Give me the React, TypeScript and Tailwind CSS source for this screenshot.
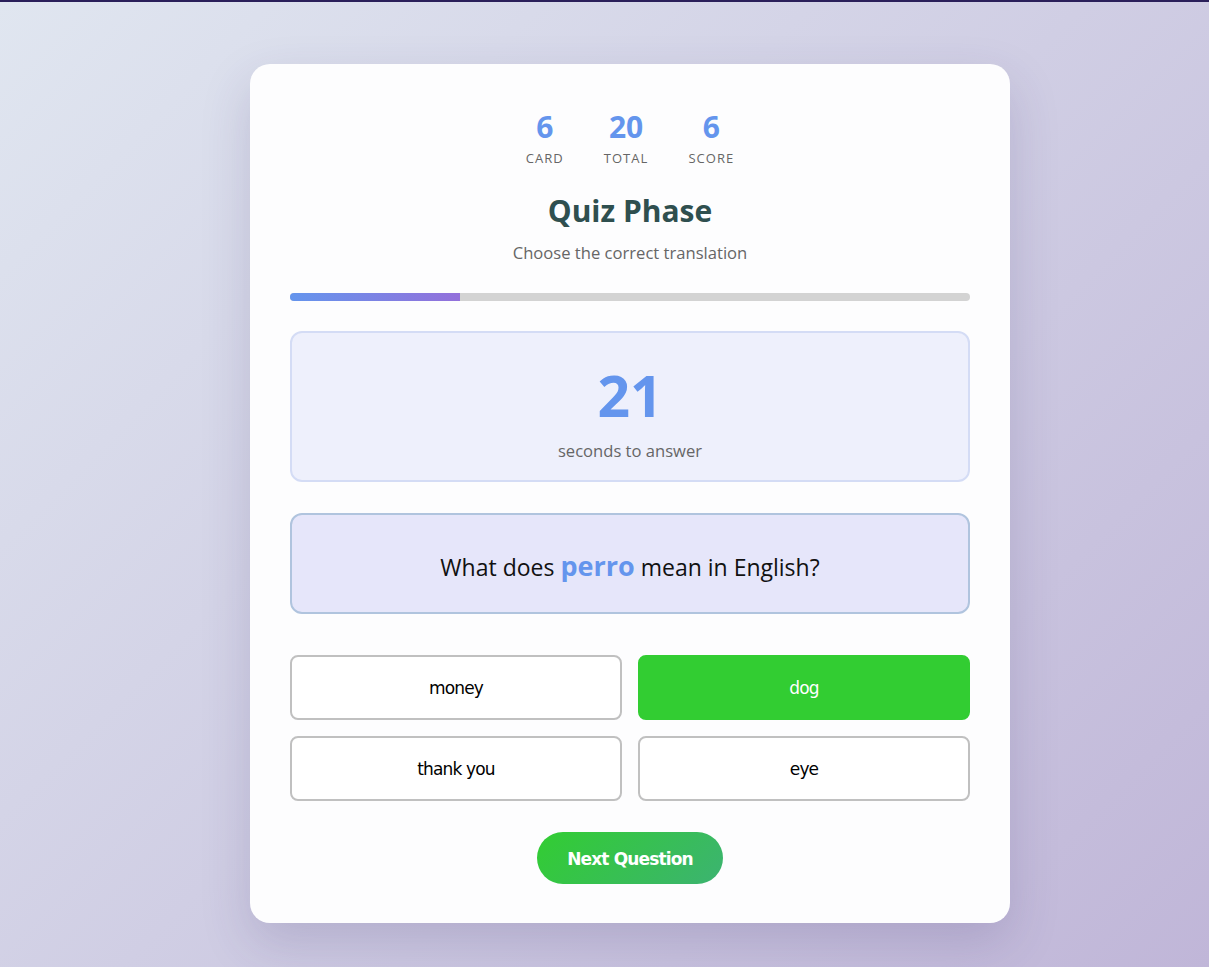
const stats = [
  { value: '6', label: 'Card' },
  { value: '20', label: 'Total' },
  { value: '6', label: 'Score' },
]

const options = [
  { text: 'money', correct: false },
  { text: 'dog', correct: true },
  { text: 'thank you', correct: false },
  { text: 'eye', correct: false },
]

export default function App() {
  return (
    <div className="min-h-[967px] bg-[linear-gradient(135deg,#e0e6f0_0%,#c0b6d8_100%)] font-['Open_Sans',sans-serif]">
      <div className="h-[2px] bg-[#2a1f5a]" />
      <div className="flex justify-center pt-[62px] pb-[45px] pl-[51px]">
        <div className="w-[760px] rounded-[20px] bg-[#fdfdfe] px-10 pt-[42px] pb-[39px] shadow-[0_20px_50px_rgba(60,50,110,0.18)]">
          <div className="flex justify-center gap-[40px]">
            {stats.map((s) => (
              <div key={s.label} className="flex flex-col items-center">
                <span className="text-[30px] font-bold leading-[42px] text-[#6495ed]">{s.value}</span>
                <span className="mt-[2px] text-[13px] uppercase leading-[16px] tracking-[0.08em] text-[#666]">{s.label}</span>
              </div>
            ))}
          </div>

          <h2 className="mt-[25px] text-center text-[30px] font-bold leading-[40px] text-[#2f4f4f]">Quiz Phase</h2>
          <p className="mt-[10px] pt-px text-center text-[16.6px] leading-[22px] text-[#666]">Choose the correct translation</p>

          <div className="mt-[29px] h-[8px] overflow-hidden rounded-full bg-[#d3d3d3]">
            <div className="h-full bg-[linear-gradient(90deg,#6495ed,#9370db)]" style={{ width: '25%' }} />
          </div>

          <div className="mt-[30px] flex h-[151px] flex-col items-center rounded-[12px] border-2 border-[#d4dcf5] bg-[#eef0fc] pt-[27px]">
            <span className="text-[57px] font-bold leading-[70px] text-[#6495ed]">21</span>
            <span className="mt-[10px] text-[16.6px] leading-[22px] text-[#666]">seconds to answer</span>
          </div>

          <div className="mt-[31px] flex h-[101px] items-center justify-center rounded-[12px] border-2 border-[#b0c4de] bg-[#e6e6fa] pt-[5px]">
            <p className="text-[23px] leading-[30px] text-[#111]">
              What does <span className="text-[27px] font-bold text-[#6495ed]">perro</span> mean in English?
            </p>
          </div>

          <div className="mt-[41px] grid grid-cols-2 gap-4">
            {options.map((o) => (
              <button
                key={o.text}
                className={
                  o.correct
                    ? "h-[65px] rounded-[8px] border-2 border-[#32cd32] bg-[#32cd32] pt-[3px] font-['DejaVu_Sans',sans-serif] text-[17px] tracking-[-0.05em] text-white"
                    : "h-[65px] rounded-[8px] border-2 border-[#c0c0c0] bg-white pt-[3px] font-['DejaVu_Sans',sans-serif] text-[17px] tracking-[-0.05em] text-black"
                }
              >
                {o.text}
              </button>
            ))}
          </div>

          <div className="mt-[31px] flex justify-center">
            <button className="h-[52px] w-[186px] rounded-full bg-[linear-gradient(135deg,#32cd32,#3cb371)] pt-[3px] font-['DejaVu_Sans',sans-serif] text-[17px] font-bold tracking-[-0.05em] text-white">
              Next Question
            </button>
          </div>
        </div>
      </div>
    </div>
  )
}
